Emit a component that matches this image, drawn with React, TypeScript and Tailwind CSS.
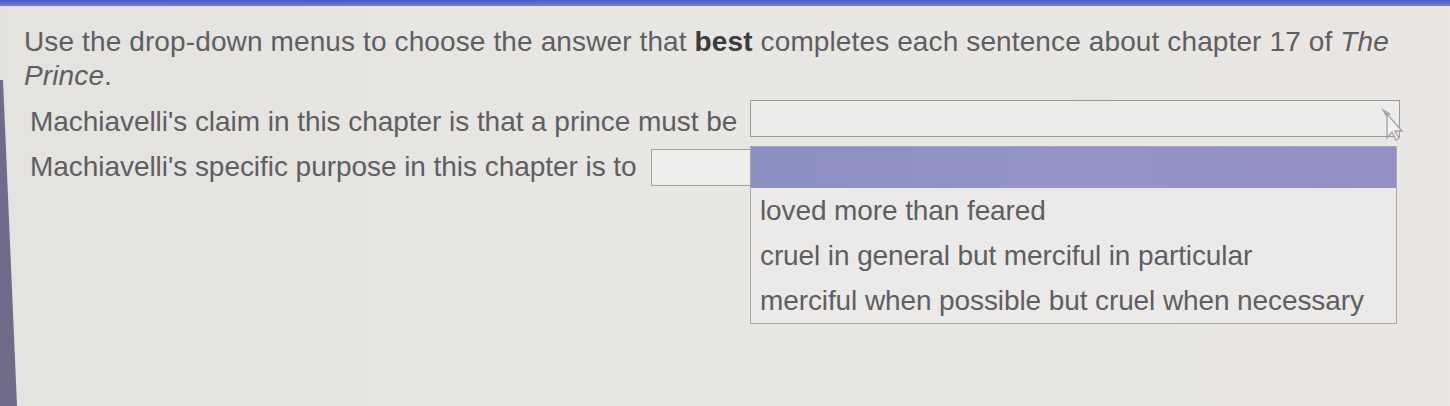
import React from "react";

export default function App() {
  const options = [
    "loved more than feared",
    "cruel in general but merciful in particular",
    "merciful when possible but cruel when necessary",
  ];
  return (
    <div className="relative w-[1450px] h-[406px] overflow-hidden bg-gradient-to-r from-[#e4e3df] via-[#e8e7e4] to-[#e9e6e3] text-[#5e5e63] [font-family:'Liberation_Sans',Arial,sans-serif]">
      <div className="h-[6px] bg-gradient-to-b from-[#4a57c4] to-[#7480cc]" />
      <div className="pl-[24px] pr-[26px] pt-[19px]">
        <p className="text-[28px] leading-[34px] tracking-[0.12px]">
          Use the drop-down menus to choose the answer that <b className="font-bold text-[#3a3a40]">best</b> completes each sentence about chapter 17 of <i>The Prince</i>.
        </p>
        <div className="mt-[6px] flex items-center h-[38px] pl-[6px]">
          <span className="pt-[7px] text-[28px] leading-[32px] tracking-[-0.05px] whitespace-nowrap">
            Machiavelli's claim in this chapter is that a prince must be
          </span>
          <div className="ml-auto mr-[24px] w-[650px] h-[37px] border border-[#9a9a9e] bg-[#ececea]" />
        </div>
        <div className="mt-[11px] flex items-center h-[38px] pl-[6px]">
          <span className="text-[28px] leading-[32px] tracking-[-0.05px] whitespace-nowrap">
            Machiavelli's specific purpose in this chapter is to
          </span>
          <div className="ml-[14px] w-[100px] h-[37px] border border-[#a4a4a8] bg-[#ededeb]" />
        </div>
      </div>

      {/* open dropdown list */}
      <div className="absolute left-[750px] top-[146px] w-[647px] border border-[#a8a8ac] bg-[#ebeae8]">
        <div className="h-[41px] bg-gradient-to-r from-[#8c8fc2] via-[#9494c8] to-[#9390c4]" />
        {options.map((o) => (
          <div key={o} className="h-[45px] flex items-center pl-[9px] text-[28px] tracking-[-0.1px] whitespace-nowrap">
            {o}
          </div>
        ))}
      </div>

      {/* mouse cursor */}
      <svg className="absolute left-[1378px] top-[104px]" width="30" height="40" viewBox="0 0 30 40">
        <path d="M3 4 L9 14 L9 12 L13 10 Z" fill="#8a8496" opacity="0.7" />
        <path d="M9 10 L9 34 L14 28 L18 36 L21 34 L17 27 L24 27 Z" fill="#f2f2f2" stroke="#a6a2b0" strokeWidth="1.4" />
      </svg>

      {/* left edge of monitor */}
      <svg className="absolute left-0 top-0" width="24" height="406" viewBox="0 0 24 406">
        <polygon points="0,80 3,80 17,406 0,406" fill="#6e6c88" />
      </svg>
    </div>
  );
}
